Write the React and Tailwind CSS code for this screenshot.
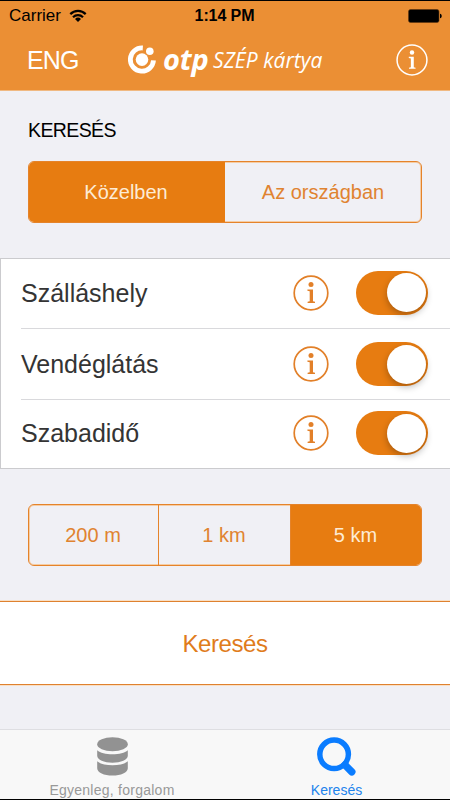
import React, { useState } from 'react';

const CATEGORIES = ['Szálláshely', 'Vendéglátás', 'Szabadidő'];
const ROW_HEIGHTS = ['h-[70px] pb-[2px]', 'h-[71px]', 'h-[68px] pb-[2px]'];
const DISTANCES = ['200 m', '1 km', '5 km'];
const DISTANCE_WIDTHS = ['w-[130px]', 'w-[132px]', 'w-[130px]'];

const InfoIcon = ({ className }) => (
  <svg className={className} viewBox="0 0 36 36" fill="none" aria-hidden="true">
    <circle cx="18" cy="18" r="16.8" stroke="currentColor" strokeWidth="1.7" />
    <circle cx="18" cy="9.6" r="2.5" fill="currentColor" />
    <path d="M14.4 14.4h5.6v11.8l2 .5v1.200h-7.400v-1.200l2.100-.5v-9.900l-2.300-.6z" fill="currentColor" />
  </svg>
);

const WifiIcon = () => (
  <svg className="w-[18px] h-[14px]" viewBox="0 0 18 14" fill="none" stroke="black" aria-hidden="true">
    <path d="M1.300 5.100a10.900 10.900 0 0 1 15.400 0" strokeWidth="2.200" />
    <path d="M4 8.2a7.1 7.1 0 0 1 10 0" strokeWidth="2.200" />
    <path d="M9 13 6 10a4.3 4.3 0 0 1 6 0z" fill="black" stroke="none" />
  </svg>
);

const BatteryIcon = () => (
  <svg className="w-[35px] h-[14px]" viewBox="0 0 35 14" aria-hidden="true">
    <rect x="0.5" y="0.5" width="30.5" height="13" rx="2" fill="black" stroke="#5d3510" strokeWidth="0.6" />
    <path d="M32 4.7c2.3.5 2.3 4.1 0 4.6z" fill="black" />
  </svg>
);

const LogoMark = () => (
  <svg className="w-[30px] h-[30px]" viewBox="0 0 30 30" aria-hidden="true">
    <path d="M15.800 3A11.600 11.600 0 1 0 26.500 15.400" fill="none" stroke="white" strokeWidth="4.800" />
    <circle cx="15" cy="14.600" r="6.3" fill="white" />
    <circle cx="22.800" cy="6.300" r="3.800" fill="white" />
  </svg>
);

const DatabaseIcon = () => (
  <svg className="w-[31px] h-[39px]" viewBox="0 0 31 39" fill="#929292" aria-hidden="true">
    <ellipse cx="15.5" cy="7.3" rx="15.3" ry="7" />
    <path d="M.2 13.3c3 2.6 8.6 4 15.3 4s12.300-1.400 15.300-4v5.400c0 3.900-6.900 7-15.300 7s-15.300-3.100-15.300-7z" />
    <path d="M.2 24.300c3 2.600 8.600 4 15.300 4s12.300-1.400 15.300-4v6.900c0 4.200-6.900 7.400-15.300 7.400s-15.300-3.200-15.300-7.400z" />
  </svg>
);

const SearchIcon = () => (
  <svg className="w-[39px] h-[39px]" viewBox="0 0 39 39" fill="none" stroke="#0a7cff" aria-hidden="true">
    <circle cx="17.100" cy="17.300" r="14.300" strokeWidth="5.500" />
    <path d="m28 28 6.800 6.800" strokeWidth="7.400" strokeLinecap="round" />
  </svg>
);

const Toggle = ({ checked, onChange, label }) => (
  <button
    role="switch"
    aria-checked={checked}
    aria-label={label}
    onClick={onChange}
    className={`flex items-center w-[72px] h-[44px] px-[2px] rounded-full ${
      checked ? 'justify-end bg-[#e77c11]' : 'justify-start bg-gray-200'
    }`}
  >
    <span className="size-[39px] rounded-full bg-white shadow-[0_3px_7px_rgba(0,0,0,0.28)]" />
  </button>
);

function App() {
  const [area, setArea] = useState('near');
  const [distance, setDistance] = useState('5 km');
  const [enabled, setEnabled] = useState([true, true, true]);

  const toggle = (index) => {
    setEnabled(enabled.map((value, i) => (i === index ? !value : value)));
  };

  return (
    <div className="flex flex-col w-[450px] h-[800px] overflow-hidden bg-[#f0f0f5] border-y border-black font-['Liberation_Sans',Arial,sans-serif]">
      <header className="h-[90px] shrink-0 bg-[#eb8f34] border-b border-[#f0b982]">
        <div className="grid grid-cols-3 items-center h-[29px] pl-[9px] pr-[7px] text-black">
          <div className="flex items-center gap-[8px]">
            <span className="text-[17px] leading-none">Carrier</span>
            <WifiIcon />
          </div>
          <span className="pr-[3px] text-center text-[16px] font-bold leading-none tracking-[-0.1px]">1:14 PM</span>
          <div className="flex justify-end">
            <BatteryIcon />
          </div>
        </div>
        <div className="flex items-center h-[60px] pl-[27px] pr-[22px] text-white">
          <button className="w-[100px] text-left text-[25px] leading-none tracking-[-0.900px]">ENG</button>
          <div className="flex items-center">
            <LogoMark />
            <span className="ml-[6px] w-[50px] pb-[2px] font-['Open_Sans',sans-serif] text-[29px] font-bold italic leading-[32px] tracking-[-0.200px]">
              otp
            </span>
            <span className="whitespace-nowrap font-['Open_Sans',sans-serif] text-[21px] font-medium italic leading-[32px] tracking-[0.050px]">
              SZÉP kártya
            </span>
          </div>
          <button className="ml-auto" aria-label="Info">
            <InfoIcon className="size-[32px]" />
          </button>
        </div>
      </header>

      <main className="flex flex-col h-[638px] shrink-0">
        <h1 className="h-[70px] pt-[28px] pl-[28px] text-[19.500px] leading-[22px] tracking-[-0.600px] text-black">KERESÉS</h1>

        <div className="flex shrink-0 mx-[28px] w-[394px] h-[62px] overflow-hidden rounded-[6px] border border-[#e5832a] shadow-[inset_0_0_0_1px_#f5cda5] text-[20px]">
          <button
            onClick={() => setArea('near')}
            className={`w-[196px] pr-[2px] ${area === 'near' ? 'bg-[#e77c11] text-[#fdebd5]' : 'text-[#e08330]'}`}
          >
            Közelben
          </button>
          <button
            onClick={() => setArea('country')}
            className={`flex-1 ${area === 'country' ? 'bg-[#e77c11] text-[#fdebd5]' : 'text-[#e08330]'}`}
          >
            Az országban
          </button>
        </div>

        <ul className="shrink-0 mt-[35px] h-[211px] bg-white border-y border-l border-[#cbcbce]">
          {CATEGORIES.map((name, index) => (
            <li key={name} className="pl-[20px]">
              <div className={`flex items-center pr-[22px] ${ROW_HEIGHTS[index]} ${index < 2 ? 'border-b border-[#d9d9dc]' : ''}`}>
                <span className="flex-1 text-[25px] leading-[28px] text-[#343434]">{name}</span>
                <button className="mr-[27px] text-[#e28029]" aria-label={`${name} info`}>
                  <InfoIcon className="size-[36px]" />
                </button>
                <Toggle checked={enabled[index]} onChange={() => toggle(index)} label={name} />
              </div>
            </li>
          ))}
        </ul>

        <div className="flex shrink-0 mt-[35px] mx-[28px] w-[394px] h-[62px] overflow-hidden rounded-[6px] border border-[#e5832a] shadow-[inset_0_0_0_1px_#f5cda5] text-[20px]">
          {DISTANCES.map((item, index) => (
            <button
              key={item}
              onClick={() => setDistance(item)}
              className={`pr-[1px] border-r last:border-r-0 border-[#e5832a] ${DISTANCE_WIDTHS[index]} ${
                distance === item ? 'bg-[#e77c11] text-[#fdebd5]' : 'text-[#e08330]'
              }`}
            >
              {item}
            </button>
          ))}
        </div>

        <button className="shrink-0 mt-[35px] h-[84px] pt-[2px] bg-white border-y border-[#df812f] shadow-[0_0_0_1px_#f8dfc5] text-[24px] tracking-[-0.400px] text-[#e07c1c]">
          Keresés
        </button>
      </main>

      <nav className="grid grid-cols-2 flex-1 bg-[#f8f8f8] border-t border-[#dedee2] text-[14px] leading-[16px]">
        <button className="flex flex-col items-center pt-[7px] pr-[1px] gap-[6px] tracking-[0.250px] text-[#999999]">
          <DatabaseIcon />
          <span>Egyenleg, forgalom</span>
        </button>
        <button className="flex flex-col items-center pt-[7px] pr-[2px] gap-[6px] text-[#2183ec]">
          <SearchIcon />
          <span>Keresés</span>
        </button>
      </nav>
    </div>
  );
}

export default App;
